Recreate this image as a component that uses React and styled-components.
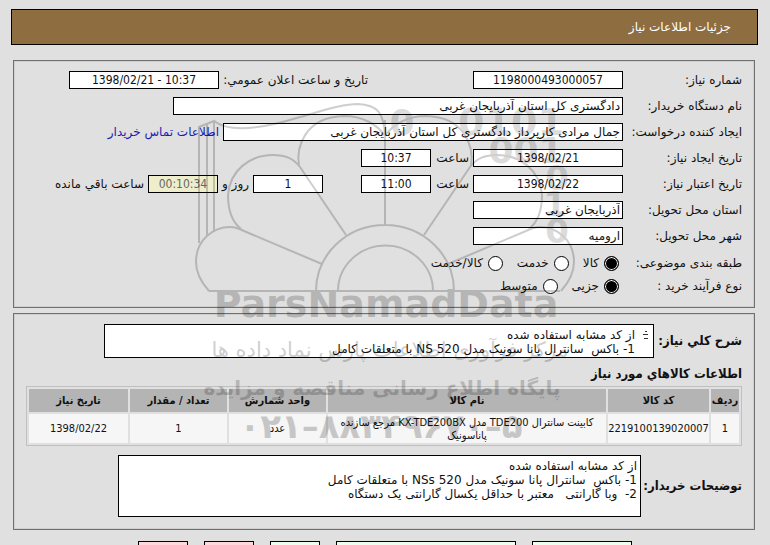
import React from "react";
import styled, { createGlobalStyle } from "styled-components";

const narrow = '"DejaVu Sans Condensed", "DejaVu Sans", sans-serif';

const GlobalStyle = createGlobalStyle`
  body {
    margin: 0;
    background: #e0e0e0;
    color: #111;
    font-family: "DejaVu Sans", sans-serif;
    font-size: 12px;
    line-height: 14px;
  }
  input, textarea, button {
    font: inherit;
    color: inherit;
    box-sizing: border-box;
    margin: 0;
  }
`;

const Page = styled.div`
  position: relative;
  box-sizing: border-box;
  height: 100vh;
  padding: 9px 12px 0 11px;
  overflow-x: hidden;
  overflow-y: auto;
  scrollbar-width: none;
`;

const TitleBar = styled.header`
  display: flex;
  align-items: center;
  height: 34px;
  padding: 0 26px;
  border: 1px solid #000;
  background: #8e6d41;
  color: #fff;
`;

const Title = styled.h1`
  margin: 0;
  font-size: 12px;
  font-weight: normal;
`;

const Panel = styled.section`
  margin: ${(p) => p.$top}px 3px 0 2px;
  padding: 10px 12px ${(p) => p.$bottom}px;
  border: 1px solid #707070;
  box-shadow: inset 0 0 0 1px #cfcfcf;
`;

const Rows = styled.div`
  display: grid;
  row-gap: 8px;
`;

const Row = styled.div`
  display: flex;
  align-items: center;
  gap: 4px;
  height: 18px;
  white-space: nowrap;
`;

const RadioRows = styled.div`
  display: grid;
  row-gap: 5px;
  padding: 9px 0 4px;
`;

const Label = styled.label`
  flex: none;
  width: 115px;
`;

const BoldLabel = styled.label`
  flex: none;
  width: ${(p) => p.$width}px;
  font-family: ${narrow};
  font-size: 13px;
  font-weight: bold;
  white-space: nowrap;
`;

const Text = styled.label`
  flex: none;
  min-width: ${(p) => p.$width || 0}px;
`;

const Field = styled.input`
  width: ${(p) => p.$width}px;
  height: 18px;
  padding: 0 2px;
  border: 1px solid #000;
  border-radius: 0;
  background: #fff;
  font-family: ${(p) => (p.$start ? "inherit" : narrow)};
  text-align: ${(p) => (p.$start ? "start" : "center")};

  &:disabled {
    background: #eeeecc;
    color: #666;
  }
`;

const Gap = styled.span`
  flex: none;
  width: ${(p) => p.$width}px;
`;

const ContactLink = styled.a`
  color: #1a1ab8;
  text-decoration: none;
`;

const Choices = styled.div`
  display: flex;
  gap: 14px;
  padding-right: 4px;
`;

const Choice = styled.label`
  display: flex;
  align-items: center;
  gap: 5px;
`;

const Radio = styled.input`
  appearance: none;
  width: 15px;
  height: 15px;
  border: 1px solid #000;
  border-radius: 50%;
  background: #fff;

  &:checked {
    background: #000;
    box-shadow: inset 0 0 0 1px #fff;
  }
`;

const NoteRow = styled.div`
  display: flex;
  align-items: center;
  gap: 4px;
`;

const NoteBox = styled.div`
  display: flex;
  flex: 0 1 ${(p) => p.$width}px;
  box-sizing: border-box;
  height: ${(p) => p.$height}px;
  border: 1px solid #000;
  background: #fff;
`;

const Note = styled.textarea`
  flex: 1;
  min-width: 0;
  padding: 3px;
  border: 0;
  background: none;
  resize: none;
  overflow: hidden;
`;

const Spinner = styled.svg`
  flex: none;
  width: 15px;
  height: 18px;
`;

const SubTitle = styled.h2`
  margin: 8px 0 4px;
  font-family: ${narrow};
  font-size: 13px;
  line-height: 16px;
`;

const Table = styled.table`
  width: 100%;
  margin-bottom: 9px;
  table-layout: fixed;
  border: 1px solid #c0c0c0;
  border-spacing: 2px;
  font-family: ${narrow};
  font-size: 11px;
  line-height: 13px;
  text-align: center;
`;

const Th = styled.th`
  width: ${(p) => (p.$width ? `${p.$width}px` : "auto")};
  height: 23px;
  padding: 0;
  background: #b4b4b4;
`;

const Td = styled.td`
  height: 29px;
  padding: ${(p) => (p.$wide ? "0 8px" : "0")};
  background: #f6f6f6;
`;

const Actions = styled.div`
  display: flex;
  justify-content: center;
  gap: 16px;
  margin-top: 11px;
`;

const Action = styled.button`
  width: ${(p) => p.$width}px;
  height: 24px;
  border: 1px solid #000;
  background: ${(p) => (p.$danger ? "#ffd9d9" : "#edffed")};
`;

const Mark = styled.svg`
  position: absolute;
  top: 0;
  left: 50%;
  width: 770px;
  height: 545px;
  margin-left: -385px;
  opacity: 0.19;
  pointer-events: none;
`;

const MarkText = styled.text`
  direction: ${(p) => p.$dir || "ltr"};
  font-size: ${(p) => p.$size}px;
  font-weight: ${(p) => (p.$light ? "normal" : "bold")};
  text-anchor: middle;
`;

const petals = (
  <>
    <path d="M209 291C200 281 196 272 196 262C196 240 213 227 230 227C236 227 240 229 244 231L322 264" />
    <path d="M241 229C231 221 228 210 228 195C230 170 250 155 273 155C285 155 293 158 300 167L346 235" />
    <path d="M299 166C296 148 304 117 344 116C362 116 377 124 385 136" />
  </>
);

const Watermark = () => (
  <Mark viewBox="0 0 770 545" aria-hidden="true">
    <g fill="none" stroke="#000" strokeWidth="2">
      {petals}
      <g transform="translate(770 0) scale(-1 1)">{petals}</g>
      <path d="M209 291H560M385 225V120M316 291a69 66 0 0 1 138 0M338 291a47 45 0 0 1 95 0" />
      <path d="M199 243V127L214 121V232M207 236V124" />
      <path d="M214 121C228 132 255 131 300 117C325 110 343 104 358 104C377 105 384 112 385 136" />
    </g>
    <g opacity="0.7">
      <MarkText x="402" y="135" $size="36">0</MarkText>
      <MarkText x="511" y="135" $size="38">0101</MarkText>
      <MarkText x="526" y="163" $size="36">001</MarkText>
      <MarkText x="557" y="190" $size="34">0</MarkText>
      <MarkText x="555" y="216" $size="34">1</MarkText>
      <MarkText x="557" y="243" $size="34">0</MarkText>
    </g>
    <MarkText x="386" y="317" $size="38">ParsNamadData</MarkText>
    <MarkText x="390" y="357" $size="21" $dir="rtl" $light>
      مرکز فرآوری اطلاعات پارس نماد داده ها
    </MarkText>
    <MarkText x="382" y="395" $size="20" $dir="rtl">
      پایگاه اطلاع رسانی مناقصه و مزایده
    </MarkText>
    <MarkText x="381" y="438" $size="34">۰۲۱–۸۸۳۴۹۶۷۰–۵</MarkText>
  </Mark>
);

const columns = [
  ["ردیف", 28],
  ["کد کالا", 101],
  ["نام کالا", 0],
  ["واحد شمارش", 97],
  ["تعداد / مقدار", 97],
  ["تاریخ نیاز", 99],
];

const rows = [
  [
    "1",
    "2219100139020007",
    "کابینت سانترال TDE200 مدل KX-TDE200BX مرجع سازنده پاناسونیک",
    "عدد",
    "1",
    "1398/02/22",
  ],
];

const summary = `از کد مشابه استفاده شده
1- باکس  سانترال پانا سونیک مدل NS 520 با متعلقات کامل`;

const comments = `از کد مشابه استفاده شده
1- باکس  سانترال پانا سونیک مدل NSs 520 با متعلقات کامل
2-  وبا گارانتی   معتبر با حداقل یکسال گارانتی یک دستگاه`;

const RadioRow = ({ label, name, options }) => (
  <Row role="radiogroup" aria-labelledby={name}>
    <Label as="span" id={name}>{label}</Label>
    <Choices>
      {options.map((option, i) => (
        <Choice key={option}>
          <Radio type="radio" name={name} defaultChecked={i === 0} />
          {option}
        </Choice>
      ))}
    </Choices>
  </Row>
);

const NeedInfo = () => (
  <Panel $top={15} $bottom={8}>
    <Rows>
      <Row>
        <Label htmlFor="number">شماره نیاز:</Label>
        <Field id="number" $width={150} defaultValue="1198000493000057" />
        <Gap $width={97} />
        <Text htmlFor="announce" $width={145}>تاریخ و ساعت اعلان عمومي:</Text>
        <Field id="announce" $width={150} defaultValue="10:37 - 1398/02/21" />
      </Row>
      <Row>
        <Label htmlFor="buyer">نام دستگاه خریدار:</Label>
        <Field id="buyer" $width={450} $start defaultValue="دادگستری کل استان آذربایجان غربی" />
      </Row>
      <Row>
        <Label htmlFor="creator">ایجاد کننده درخواست:</Label>
        <Field
          id="creator"
          $width={400}
          $start
          defaultValue="جمال مرادی کارپرداز دادگستری کل استان آذربایجان غربی"
        />
        <ContactLink href="#contact">اطلاعات تماس خریدار</ContactLink>
      </Row>
      <Row>
        <Label htmlFor="created">تاریخ ایجاد نیاز:</Label>
        <Field id="created" $width={150} defaultValue="1398/02/21" />
        <Text htmlFor="createdTime" $width={34}>ساعت</Text>
        <Field id="createdTime" $width={70} defaultValue="10:37" />
      </Row>
      <Row>
        <Label htmlFor="valid">تاریخ اعتبار نیاز:</Label>
        <Field id="valid" $width={150} defaultValue="1398/02/22" />
        <Text htmlFor="validTime" $width={34}>ساعت</Text>
        <Field id="validTime" $width={70} defaultValue="11:00" />
        <Gap $width={30} />
        <Field id="days" $width={70} defaultValue="1" />
        <Text htmlFor="days" $width={26}>روز و</Text>
        <Field id="left" $width={70} defaultValue="00:10:34" disabled />
        <Text htmlFor="left">ساعت باقي مانده</Text>
      </Row>
      <Row>
        <Label htmlFor="province">استان محل تحویل:</Label>
        <Field id="province" $width={150} $start defaultValue="آذربایجان غربی" />
      </Row>
      <Row>
        <Label htmlFor="city">شهر محل تحویل:</Label>
        <Field id="city" $width={150} $start defaultValue="ارومیه" />
      </Row>
    </Rows>
    <RadioRows>
      <RadioRow name="subject" label="طبقه بندی موضوعی:" options={["کالا", "خدمت", "کالا/خدمت"]} />
      <RadioRow name="process" label="نوع فرآیند خرید :" options={["جزیی", "متوسط"]} />
    </RadioRows>
  </Panel>
);

const NeedItems = () => (
  <Panel $top={5} $bottom={12}>
    <NoteRow>
      <BoldLabel htmlFor="summary" $width={84}>شرح کلي نیاز:</BoldLabel>
      <NoteBox $width={550} $height={34}>
        <Spinner viewBox="0 0 15 18" aria-hidden="true">
          <path d="M5 9.500h5M7 6.500h2M6 13.500h4" stroke="#333" />
        </Spinner>
        <Note id="summary" defaultValue={summary} />
      </NoteBox>
    </NoteRow>
    <SubTitle>اطلاعات کالاهاي مورد نیاز</SubTitle>
    <Table>
      <thead>
        <tr>
          {columns.map(([name, width]) => (
            <Th key={name} $width={width}>{name}</Th>
          ))}
        </tr>
      </thead>
      <tbody>
        {rows.map((cells) => (
          <tr key={cells[0]}>
            {cells.map((cell, i) => (
              <Td key={i} $wide={i === 2}>{cell}</Td>
            ))}
          </tr>
        ))}
      </tbody>
    </Table>
    <NoteRow>
      <BoldLabel htmlFor="comments" $width={97}>توضیحات خریدار:</BoldLabel>
      <NoteBox $width={523} $height={62}>
        <Note id="comments" defaultValue={comments} />
      </NoteBox>
    </NoteRow>
  </Panel>
);

export default function App() {
  return (
    <Page dir="rtl">
      <GlobalStyle />
      <TitleBar>
        <Title>جزئیات اطلاعات نیاز</Title>
      </TitleBar>
      <NeedInfo />
      <NeedItems />
      <Actions>
        <Action type="button" $width={100} />
        <Action type="button" $width={180} />
        <Action type="button" $width={50} />
        <Action type="button" $width={50} $danger />
        <Action type="button" $width={50} $danger />
      </Actions>
      <Watermark />
    </Page>
  );
}
